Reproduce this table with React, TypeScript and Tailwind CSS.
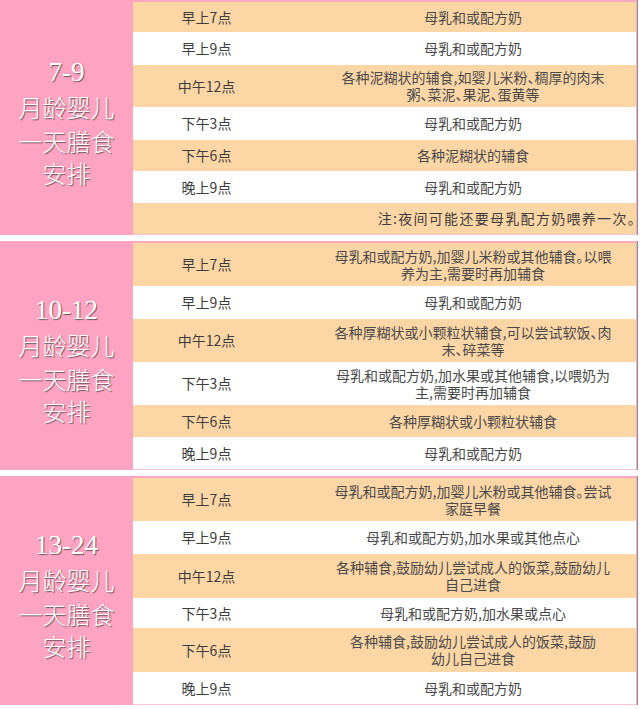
import React from "react";

type Row = { time: string; lines: string[]; bg: "p" | "w"; h: string };
type Section = { range: string; rows: Row[]; note?: string; gapTop: string };

const sections: Section[] = [
  {
    range: "7-9",
    gapTop: "",
    rows: [
      { time: "早上7点", lines: ["母乳和或配方奶"], bg: "p", h: "h-[30px]" },
      { time: "早上9点", lines: ["母乳和或配方奶"], bg: "w", h: "h-[33px]" },
      { time: "中午12点", lines: ["各种泥糊状的辅食,如婴儿米粉、稠厚的肉末", "粥、菜泥、果泥、蛋黄等"], bg: "p", h: "h-[42px]" },
      { time: "下午3点", lines: ["母乳和或配方奶"], bg: "w", h: "h-[33px]" },
      { time: "下午6点", lines: ["各种泥糊状的辅食"], bg: "p", h: "h-[31px]" },
      { time: "晚上9点", lines: ["母乳和或配方奶"], bg: "w", h: "h-[32px]" },
    ],
    note: "注:夜间可能还要母乳配方奶喂养一次。",
  },
  {
    range: "10-12",
    gapTop: "mt-[6px]",
    rows: [
      { time: "早上7点", lines: ["母乳和或配方奶,加婴儿米粉或其他辅食。以喂", "养为主,需要时再加辅食"], bg: "p", h: "h-[43px]" },
      { time: "早上9点", lines: ["母乳和或配方奶"], bg: "w", h: "h-[33px]" },
      { time: "中午12点", lines: ["各种厚糊状或小颗粒状辅食,可以尝试软饭、肉", "末、碎菜等"], bg: "p", h: "h-[43px]" },
      { time: "下午3点", lines: ["母乳和或配方奶,加水果或其他辅食,以喂奶为", "主,需要时再加辅食"], bg: "w", h: "h-[43px]" },
      { time: "下午6点", lines: ["各种厚糊状或小颗粒状辅食"], bg: "p", h: "h-[32px]" },
      { time: "晚上9点", lines: ["母乳和或配方奶"], bg: "w", h: "h-[32px]" },
    ],
  },
  {
    range: "13-24",
    gapTop: "mt-[6px]",
    rows: [
      { time: "早上7点", lines: ["母乳和或配方奶,加婴儿米粉或其他辅食。尝试", "家庭早餐"], bg: "p", h: "h-[43px]" },
      { time: "早上9点", lines: ["母乳和或配方奶,加水果或其他点心"], bg: "w", h: "h-[33px]" },
      { time: "中午12点", lines: ["各种辅食,鼓励幼儿尝试成人的饭菜,鼓励幼儿", "自己进食"], bg: "p", h: "h-[44px]" },
      { time: "下午3点", lines: ["母乳和或配方奶,加水果或点心"], bg: "w", h: "h-[30px]" },
      { time: "下午6点", lines: ["各种辅食,鼓励幼儿尝试成人的饭菜,鼓励", "幼儿自己进食"], bg: "p", h: "h-[44px]" },
      { time: "晚上9点", lines: ["母乳和或配方奶"], bg: "w", h: "h-[32px]" },
    ],
  },
];

function Header({ range }: { range: string }) {
  return (
    <div className="w-[133px] shrink-0 bg-[#fea4c2] flex flex-col items-center justify-center text-white [text-shadow:1px_1px_1px_rgba(60,60,60,0.75)] pt-[9px]">
      <div className="text-[27px] leading-[33px] font-['Liberation_Serif','Noto_Sans_CJK_SC',serif]">{range}</div>
      <div className="text-[24px] leading-[35px] font-['Noto_Sans_CJK_SC',sans-serif] font-light">月龄婴儿</div>
      <div className="text-[24px] leading-[33px] font-['Noto_Sans_CJK_SC',sans-serif] font-light">一天膳食</div>
      <div className="text-[24px] leading-[32px] font-['Noto_Sans_CJK_SC',sans-serif] font-light">安排</div>
    </div>
  );
}

export default function App() {
  return (
    <div className="w-[640px] h-[709px] bg-white overflow-hidden font-['Noto_Sans_CJK_SC',sans-serif]">
      {sections.map((s) => (
        <section key={s.range} className={`flex w-[637px] ${s.gapTop} shadow-[1px_0_0_#8d8d8d]`}>
          <Header range={s.range} />
          <div className="flex-1 flex flex-col border-t-2 border-t-[#f8a9bf] border-b border-b-[#f6c3d1] border-r border-r-[#f3b0c3]">
            {s.rows.map((r, i) => (
              <div
                key={i}
                className={`flex items-center ${r.h} ${r.bg === "p" ? "bg-[#fdd6a6]" : "bg-white"}`}
              >
                <div className="w-[147px] shrink-0 text-center text-[14px] leading-[17px] text-[#3d3d3d]">
                  {r.time}
                </div>
                <div className="flex-1 pl-[30px] flex flex-col items-center text-[14px] leading-[17px] text-[#4a4a4a] [font-feature-settings:'halt']">
                  {r.lines.map((l, j) => (
                    <div key={j} className="whitespace-nowrap">
                      {l}
                    </div>
                  ))}
                </div>
              </div>
            ))}
            {s.note && (
              <div className="h-[31px] flex items-center justify-end bg-[#fdd6a6] pr-0 text-[14px] leading-[17px] tracking-[1.3px] text-[#3d3d3d] [font-feature-settings:'halt']">
                {s.note}
              </div>
            )}
          </div>
        </section>
      ))}
    </div>
  );
}
